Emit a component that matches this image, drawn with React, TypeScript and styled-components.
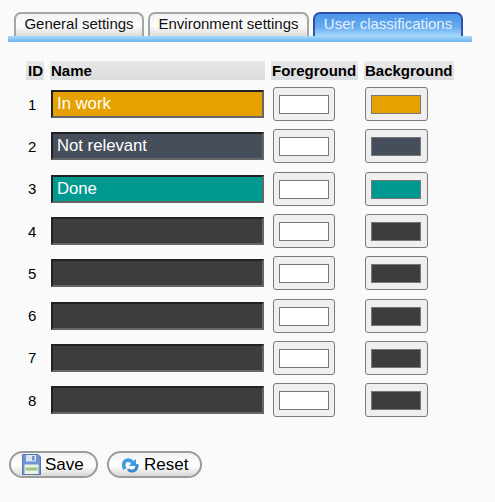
import React from "react";
import styled, { createGlobalStyle } from "styled-components";

const rows = [
  { id: 1, name: "In work", color: "#e6a000" },
  { id: 2, name: "Not relevant", color: "#474e5b" },
  { id: 3, name: "Done", color: "#009990" },
  { id: 4, name: "", color: "#3d3d3d" },
  { id: 5, name: "", color: "#3d3d3d" },
  { id: 6, name: "", color: "#3d3d3d" },
  { id: 7, name: "", color: "#3d3d3d" },
  { id: 8, name: "", color: "#3d3d3d" },
];

const Global = createGlobalStyle`
  html, body {
    margin: 0;
    background: #fafafa;
    font-family: "Liberation Sans", Arial, sans-serif;
    color: #000;
  }
`;

const Page = styled.div`
  width: 495px;
  height: 502px;
  overflow: hidden;
  box-sizing: border-box;
  padding: 12px 0 0 8px;
`;

const TabRow = styled.div`
  padding-left: 6px;
  display: flex;
  gap: 4px;
  height: 24px;
`;

const Band = styled.div`
  width: 464px;
  height: 6px;
  background: linear-gradient(#a6dcfb, #6db2f1);
`;

const Tab = styled.div<{ $active?: boolean; $width: number }>`
  width: ${p => p.$width}px;
  height: 24px;
  box-sizing: border-box;
  padding-top: 1px;
  text-align: center;
  font-size: 15px;
  line-height: 18px;
  white-space: nowrap;
  border: 2px solid ${p => (p.$active ? "#2f4fae" : "#a5a5a5")};
  border-bottom: none;
  border-radius: 7px 7px 0 0;
  color: ${p => (p.$active ? "#e6f1fd" : "#111")};
  background: ${p =>
    p.$active
      ? "linear-gradient(#4a93e8, #66abf0 60%, #a5d8fb)"
      : "linear-gradient(#f4f4f4, #fbfbfb 55%, #dcdcdc)"};
`;

const Table = styled.table`
  margin: 19px 0 0 18px;
  border-collapse: separate;
  border-spacing: 0;
`;

const Head = styled.th<{ $width: number; $inset?: number }>`
  width: ${p => p.$width}px;
  height: 22px;
  padding: 0 0 0 ${p => p.$inset ?? 1}px;
  box-sizing: border-box;
  font-size: 15px;
  line-height: 19px;
  font-weight: bold;
  text-align: left;
  white-space: nowrap;
  vertical-align: top;
  border-bottom: 3px solid transparent;
  background: linear-gradient(#e8e8e9, #dcddde);
  background-clip: padding-box;
`;

const HeadGap = styled.th`
  width: 6px;
  padding: 0;
`;

const Row = styled.tr`
  height: 42.3px;
`;

const IdCell = styled.td`
  padding: 0 0 0 2px;
  text-align: left;
  font-size: 15px;
`;

const Cell = styled.td`
  padding: 0;
`;

const Spacer = styled.td`
  padding: 0;
`;

const NameInput = styled.input<{ $color: string }>`
  display: block;
  width: 213px;
  height: 28px;
  margin-left: 1px;
  box-sizing: border-box;
  padding: 0 3px 0 4px;
  border: 2px solid;
  border-color: #222 #666 #666 #222;
  outline: none;
  border-radius: 0;
  background: ${p => p.$color};
  color: #fff;
  font-family: "Liberation Sans", Arial, sans-serif;
  font-size: 16.7px;
`;

const Swatch = styled.div<{ $inset: number; $width: number }>`
  width: ${p => p.$width}px;
  height: 34px;
  margin-left: ${p => p.$inset}px;
  box-sizing: border-box;
  padding: 7px 0 0 5px;
  border: 1px solid #7a7a7a;
  border-radius: 3px;
  background: #efefef;
`;

const SwatchFill = styled.div<{ $color: string }>`
  width: 50px;
  height: 19px;
  box-sizing: border-box;
  border: 1px solid #777;
  background: ${p => p.$color};
`;

const Actions = styled.div`
  display: flex;
  gap: 9px;
  margin: 30px 0 0 1px;
`;

const PillButton = styled.button<{ $width: number }>`
  width: ${p => p.$width}px;
  height: 27px;
  box-sizing: border-box;
  display: flex;
  align-items: center;
  gap: 4px;
  padding: 0 0 0 11px;
  border: 2px solid #9b9b9b;
  border-radius: 14px;
  background: linear-gradient(#f2f2f2, #fff 55%, #d8d8d8);
  font-family: "Liberation Sans", Arial, sans-serif;
  font-size: 17px;
  color: #000;
`;

const SaveIcon = () => (
  <svg width="19" height="21" viewBox="0 0 19 21">
    <path d="M0.5 0.5h15.500l2.500 2.500v17.500h-18z" fill="#6f95d2" stroke="#5577b0" />
    <rect x="4" y="1" width="10" height="6.500" fill="#d9e2f1" />
    <rect x="10" y="2" width="2.500" height="4.500" fill="#6f95d2" />
    <rect x="2.500" y="10.500" width="14" height="9.500" fill="#eef3e6" />
    <rect x="3.500" y="13.500" width="12" height="3" fill="#9cc67e" />
  </svg>
);

const ResetIcon = () => (
  <svg width="20" height="18" viewBox="0 0 19 18">
    <path
      d="M3 14 C0.500 10 1 5 4.500 3 C7.500 1.500 11 2.500 13 5 L15.500 3 L15.500 10 L8.500 10 L10.500 7.500 C9 5.500 6.500 5.500 5.500 7 C4.500 8.500 5 10.500 6 12 Z"
      fill="#3d9ce4"
    />
    <path
      d="M18 8 C18.500 12 16.500 16 12.500 16.500 C9.500 17 7 15.500 6.500 13.500 L9 12.500 C10 14 12 14.200 13.500 13 C15 12 15.200 10 14.800 8.500 Z"
      fill="#3488d0"
    />
  </svg>
);

export default function App() {
  return (
    <Page>
      <Global />
      <TabRow>
        <Tab $width={130}>General settings</Tab>
        <Tab $width={161}>Environment settings</Tab>
        <Tab $width={150} $active>
          User classifications
        </Tab>
      </TabRow>
      <Band />
      <Table>
        <thead>
          <tr>
            <Head $width={18} $inset={2}>
              ID
            </Head>
            <HeadGap />
            <Head $width={215}>Name</Head>
            <HeadGap />
            <Head $width={87}>Foreground</Head>
            <HeadGap />
            <Head $width={90}>Background</Head>
          </tr>
        </thead>
        <tbody>
          {rows.map(row => (
            <Row key={row.id}>
              <IdCell>{row.id}</IdCell>
              <Spacer />
              <Cell>
                <NameInput $color={row.color} defaultValue={row.name} />
              </Cell>
              <Spacer />
              <Cell>
                <Swatch $inset={2} $width={62}>
                  <SwatchFill $color="#fff" />
                </Swatch>
              </Cell>
              <Spacer />
              <Cell>
                <Swatch $inset={1} $width={63}>
                  <SwatchFill $color={row.color} />
                </Swatch>
              </Cell>
            </Row>
          ))}
        </tbody>
      </Table>
      <Actions>
        <PillButton $width={89}>
          <SaveIcon />
          Save
        </PillButton>
        <PillButton $width={95}>
          <ResetIcon />
          Reset
        </PillButton>
      </Actions>
    </Page>
  );
}
